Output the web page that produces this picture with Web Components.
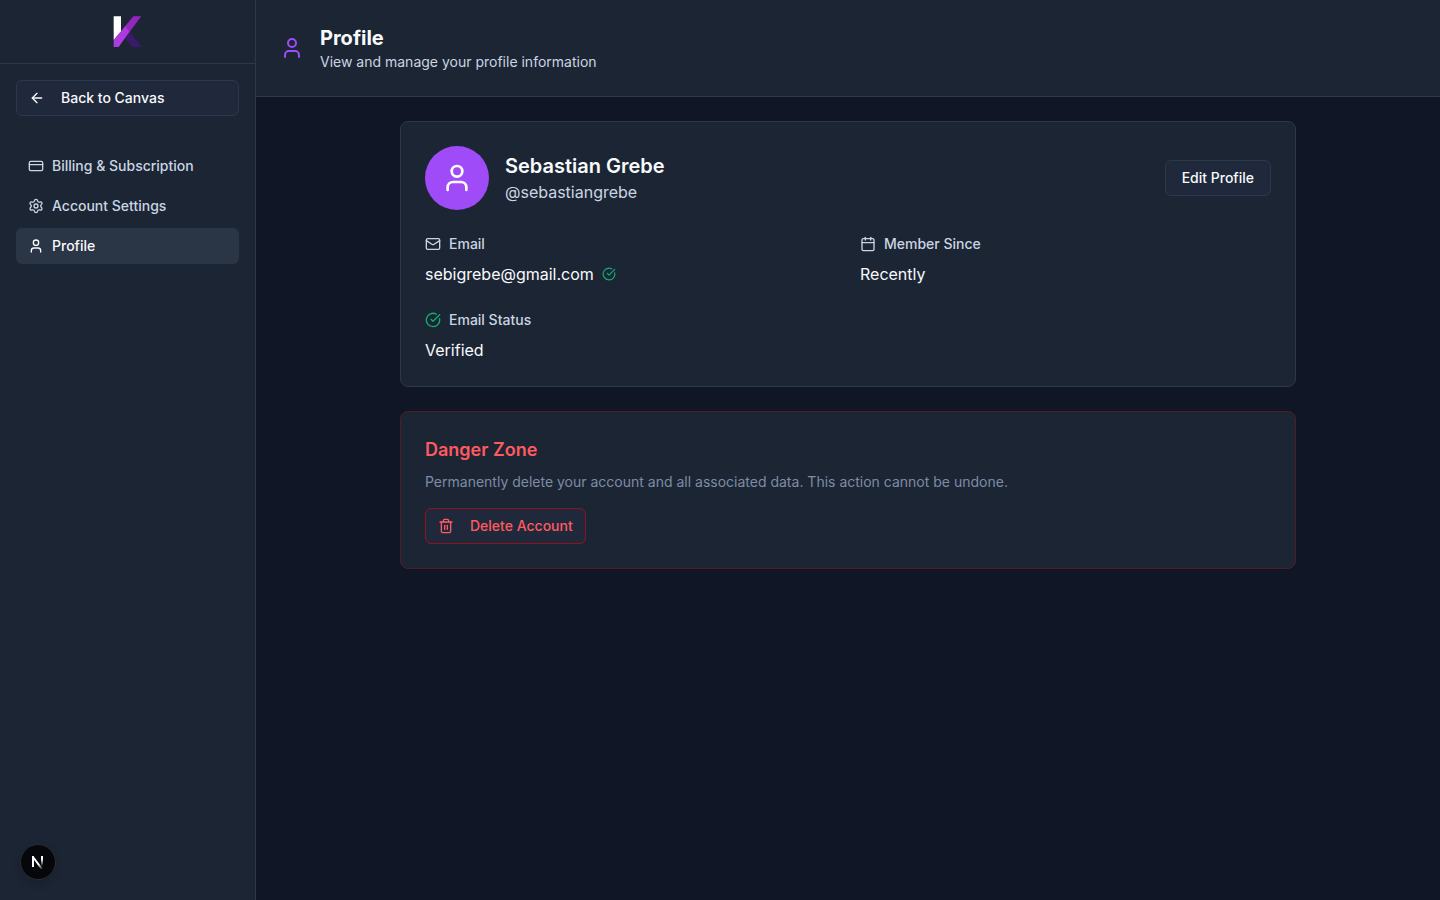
<!DOCTYPE html>
<html lang="en">
<head>
<meta charset="utf-8">
<meta name="viewport" content="width=device-width, initial-scale=1">
<title>Profile</title>
<style>
    :root{
        --bg-page: #101625;
        --bg-panel: #1c2534;
        --bg-button: #20283b;
        --bg-active: #2a3546;
        --border: #2c394b;
        --text: #f8fafc;
        --text-soft: #cad5e2;
        --text-muted: #7c8ca6;
        --accent: #9f4bf7;
        --success: #0fae75;
        --danger: #ff5a60;
        --danger-border: #8f1420;
        --danger-border-soft: #511c2a;
    }
    body{
        margin: 0;
        background: var(--bg-page);
        color: var(--text);
        font-family: Inter, "Liberation Sans", sans-serif;
        font-size: 16px;
        line-height: 24px;
    }
</style>
</head>
<body>

<app-shell>
    <app-sidebar slot="sidebar">
        <app-button slot="action" icon="arrow" wide>Back to Canvas</app-button>
        <nav-item icon="card" href="#billing">Billing &amp; Subscription</nav-item>
        <nav-item icon="settings" href="#settings">Account Settings</nav-item>
        <nav-item icon="user" href="#profile" active>Profile</nav-item>
    </app-sidebar>

    <page-header icon="user">
        <span slot="title">Profile</span>
        <span slot="subtitle">View and manage your profile information</span>
    </page-header>

    <page-content>
        <app-card>
            <profile-summary>
                <span slot="name">Sebastian Grebe</span>
                <span slot="handle">@sebastiangrebe</span>
                <app-button slot="action">Edit Profile</app-button>
            </profile-summary>
            <field-grid>
                <profile-field icon="mail" label="Email" verified>sebigrebe@gmail.com</profile-field>
                <profile-field icon="calendar" label="Member Since">Recently</profile-field>
                <profile-field icon="check" label="Email Status" success>Verified</profile-field>
            </field-grid>
        </app-card>

        <app-card danger>
            <danger-zone>
                <span slot="title">Danger Zone</span>
                <span slot="text">Permanently delete your account and all associated data. This action cannot be undone.</span>
                <app-button slot="action" icon="trash" danger>Delete Account</app-button>
            </danger-zone>
        </app-card>
    </page-content>
</app-shell>
<dev-badge></dev-badge>

<script>
const icons = {
    arrow: '<path d="m12 19-7-7 7-7"/><path d="M19 12H5"/>',
    card: '<rect width="20" height="14" x="2" y="5" rx="2"/><path d="M2 10h20"/>',
    settings: '<path d="M9.671 4.136a2.34 2.34 0 0 1 4.659 0 2.34 2.34 0 0 0 3.319 1.915 2.34 2.34 0 0 1 2.33 4.033 2.34 2.34 0 0 0 0 3.831 2.34 2.34 0 0 1-2.33 4.033 2.34 2.34 0 0 0-3.319 1.915 2.34 2.34 0 0 1-4.659 0 2.34 2.34 0 0 0-3.32-1.915 2.34 2.34 0 0 1-2.33-4.033 2.34 2.34 0 0 0 0-3.831A2.34 2.34 0 0 1 6.35 6.051a2.34 2.34 0 0 0 3.319-1.915"/><circle cx="12" cy="12" r="3"/>',
    user: '<path d="M19 21v-2a4 4 0 0 0-4-4H9a4 4 0 0 0-4 4v2"/><circle cx="12" cy="7" r="4"/>',
    mail: '<path d="m22 7-8.991 5.727a2 2 0 0 1-2.009 0L2 7"/><rect x="2" y="4" width="20" height="16" rx="2"/>',
    calendar: '<path d="M8 2v4"/><path d="M16 2v4"/><rect width="18" height="18" x="3" y="4" rx="2"/><path d="M3 10h18"/>',
    check: '<path d="M21.801 10A10 10 0 1 1 17 3.335"/><path d="m9 11 3 3L22 4"/>',
    trash: '<path d="M10 11v6"/><path d="M14 11v6"/><path d="M19 6v14a2 2 0 0 1-2 2H7a2 2 0 0 1-2-2V6"/><path d="M3 6h18"/><path d="M8 6V4a2 2 0 0 1 2-2h4a2 2 0 0 1 2 2v2"/>'
};

class BaseElement extends HTMLElement {
    constructor(){
        super();
        this.attachShadow({mode:'open'});
    }
    getTemplate(){
        const template = document.createElement('template');
        template.innerHTML = `
        <style>
        *{
            margin: 0;
            padding: 0;
            box-sizing: border-box;
        }
        :host{
            display: block;
            box-sizing: border-box;
        }
        ${this.getStyles()}
        </style>
        ${this.getMarkup()}
        `;
        return template;
    }
    connectedCallback(){
        if (this.shadowRoot.childNodes.length) return;
        this.shadowRoot.appendChild(this.getTemplate().content.cloneNode(true));
    }
}

class AppIcon extends BaseElement {
    getStyles(){
        return `
        :host{
            flex: none;
            width: var(--icon-size, 16px);
            height: var(--icon-size, 16px);
        }
        svg{
            display: block;
            width: 100%;
            height: 100%;
        }
        `
    }
    getMarkup(){
        return `
        <svg viewBox="0 0 24 24" fill="none" stroke="currentColor" stroke-width="2" stroke-linecap="round" stroke-linejoin="round" aria-hidden="true">${icons[this.getAttribute('name')]}</svg>
        `
    }
}

class AppShell extends BaseElement {
    getStyles(){
        return `
        :host{
            display: flex;
            min-height: 100vh;
        }
        main{
            flex: 1;
            min-width: 0;
        }
        `
    }
    getMarkup(){
        return `
        <slot name="sidebar"></slot>
        <main><slot></slot></main>
        `
    }
}

class AppSidebar extends BaseElement {
    getStyles(){
        return `
        :host{
            flex: none;
            width: 256px;
            background: var(--bg-panel);
            border-right: 1px solid var(--border);
        }
        .brand{
            display: flex;
            align-items: center;
            justify-content: center;
            height: 64px;
            border-bottom: 1px solid var(--border);
        }
        .brand svg{
            width: 32px;
            height: 32px;
        }
        .action{
            padding: 16px;
        }
        nav{
            display: flex;
            flex-direction: column;
            gap: 4px;
            padding: 16px;
        }
        `
    }
    getMarkup(){
        return `
        <div class="brand">
            <svg viewBox="2 2 96 96" role="img" aria-label="Logo">
                <path fill="#fff" d="M7 3h22v46L7 75z"/>
                <path fill="#3b1a6c" d="M54 49 91 95H63L40 68z"/>
                <path fill="#9226bd" d="M66 3h24L53 52 41 33z"/>
                <path fill="#ad3be0" d="M42 32 54 50 22 95H7V73z"/>
            </svg>
        </div>
        <div class="action"><slot name="action"></slot></div>
        <nav><slot></slot></nav>
        `
    }
}

class NavItem extends BaseElement {
    getStyles(){
        return `
        a{
            display: flex;
            align-items: center;
            gap: 8px;
            padding: 8px 12px;
            border-radius: 6px;
            color: var(--text-soft);
            font-size: 14px;
            font-weight: 500;
            line-height: 20px;
            text-decoration: none;
        }
        :host([active]) a{
            background: var(--bg-active);
            color: var(--text);
        }
        `
    }
    getMarkup(){
        return `
        <a href="${this.getAttribute('href')}">
            <app-icon name="${this.getAttribute('icon')}"></app-icon>
            <slot></slot>
        </a>
        `
    }
}

class AppButton extends BaseElement {
    getStyles(){
        return `
        :host{
            display: inline-block;
            vertical-align: top;
        }
        :host([wide]){
            display: block;
        }
        button{
            display: flex;
            align-items: center;
            gap: 16px;
            height: 36px;
            padding: 0 16px;
            border: 1px solid var(--border);
            border-radius: 6px;
            background: var(--bg-button);
            color: var(--text);
            font-family: inherit;
            font-size: 14px;
            font-weight: 500;
            line-height: 20px;
            white-space: nowrap;
            cursor: pointer;
        }
        :host([icon]) button{
            padding: 0 12px;
        }
        :host([wide]) button{
            width: 100%;
        }
        :host([danger]) button{
            border-color: var(--danger-border);
            color: var(--danger);
        }
        `
    }
    getMarkup(){
        const icon = this.getAttribute('icon');
        return `
        <button type="button">
            ${icon ? `<app-icon name="${icon}"></app-icon>` : ''}
            <slot></slot>
        </button>
        `
    }
}

class PageHeader extends BaseElement {
    getStyles(){
        return `
        header{
            display: flex;
            align-items: center;
            gap: 16px;
            padding: 24px;
            background: var(--bg-panel);
            border-bottom: 1px solid var(--border);
        }
        app-icon{
            --icon-size: 24px;
            color: var(--accent);
        }
        h1{
            font-size: 20px;
            font-weight: 700;
            line-height: 28px;
        }
        p{
            color: var(--text-soft);
            font-size: 14px;
            line-height: 20px;
        }
        `
    }
    getMarkup(){
        return `
        <header>
            <app-icon name="${this.getAttribute('icon')}"></app-icon>
            <div>
                <h1><slot name="title"></slot></h1>
                <p><slot name="subtitle"></slot></p>
            </div>
        </header>
        `
    }
}

class PageContent extends BaseElement {
    getStyles(){
        return `
        :host{
            padding: 24px;
        }
        .stack{
            display: flex;
            flex-direction: column;
            gap: 24px;
            max-width: 896px;
            margin: 0 auto;
        }
        `
    }
    getMarkup(){
        return `<div class="stack"><slot></slot></div>`
    }
}

class AppCard extends BaseElement {
    getStyles(){
        return `
        :host{
            padding: 24px;
            background: var(--bg-panel);
            border: 1px solid var(--border);
            border-radius: 8px;
        }
        :host([danger]){
            border-color: var(--danger-border-soft);
        }
        `
    }
    getMarkup(){
        return `<slot></slot>`
    }
}

class ProfileSummary extends BaseElement {
    getStyles(){
        return `
        :host{
            display: flex;
            align-items: center;
            gap: 16px;
            margin-bottom: 24px;
        }
        .avatar{
            --icon-size: 32px;
            display: grid;
            place-items: center;
            width: 64px;
            height: 64px;
            border-radius: 50%;
            background: var(--accent);
            color: #fff;
        }
        .who{
            flex: 1;
        }
        h2{
            font-size: 20px;
            font-weight: 600;
            line-height: 28px;
        }
        p{
            color: var(--text-soft);
        }
        `
    }
    getMarkup(){
        return `
        <div class="avatar"><app-icon name="user"></app-icon></div>
        <div class="who">
            <h2><slot name="name"></slot></h2>
            <p><slot name="handle"></slot></p>
        </div>
        <slot name="action"></slot>
        `
    }
}

class FieldGrid extends BaseElement {
    getStyles(){
        return `
        :host{
            display: grid;
            grid-template-columns: 1fr 1fr;
            gap: 24px;
        }
        `
    }
    getMarkup(){
        return `<slot></slot>`
    }
}

class ProfileField extends BaseElement {
    getStyles(){
        return `
        .label, .value{
            display: flex;
            align-items: center;
            gap: 8px;
        }
        .label{
            margin-bottom: 8px;
            color: var(--text-soft);
            font-size: 14px;
            font-weight: 500;
            line-height: 20px;
        }
        .verified{
            --icon-size: 14px;
        }
        .verified, :host([success]) .label app-icon{
            color: var(--success);
        }
        `
    }
    getMarkup(){
        return `
        <dl>
            <dt class="label">
                <app-icon name="${this.getAttribute('icon')}"></app-icon>
                ${this.getAttribute('label')}
            </dt>
            <dd class="value">
                <slot></slot>
                ${this.hasAttribute('verified') ? '<app-icon class="verified" name="check"></app-icon>' : ''}
            </dd>
        </dl>
        `
    }
}

class DangerZone extends BaseElement {
    getStyles(){
        return `
        h2{
            margin-bottom: 8px;
            color: var(--danger);
            font-size: 18px;
            font-weight: 600;
            line-height: 28px;
        }
        p{
            margin-bottom: 16px;
            color: var(--text-muted);
            font-size: 14px;
            line-height: 20px;
        }
        .action{
            display: flex;
        }
        `
    }
    getMarkup(){
        return `
        <h2><slot name="title"></slot></h2>
        <p><slot name="text"></slot></p>
        <div class="action"><slot name="action"></slot></div>
        `
    }
}

/* floats over the page in the bottom left corner */
class DevBadge extends BaseElement {
    getStyles(){
        return `
        :host{
            position: fixed;
            left: 20px;
            bottom: 20px;
        }
        button{
            display: grid;
            place-items: center;
            width: 36px;
            height: 36px;
            border: 1px solid #2b2d31;
            border-radius: 50%;
            background: #05070a;
            box-shadow: 0 4px 8px rgba(0, 0, 0, .15);
            cursor: pointer;
        }
        svg{
            width: 14px;
            height: 14px;
        }
        `
    }
    getMarkup(){
        return `
        <button type="button" aria-label="Open developer tools">
            <svg viewBox="0 0 14 14" fill="none" stroke-width="2">
                <defs>
                    <linearGradient id="stem" gradientUnits="userSpaceOnUse" x1="0" y1="1" x2="0" y2="11">
                        <stop offset=".3" stop-color="#fff"/>
                        <stop offset="1" stop-color="#fff" stop-opacity="0"/>
                    </linearGradient>
                    <linearGradient id="diagonal" gradientUnits="userSpaceOnUse" x1="6" y1="7" x2="12" y2="14">
                        <stop offset=".3" stop-color="#fff"/>
                        <stop offset="1" stop-color="#fff" stop-opacity="0"/>
                    </linearGradient>
                </defs>
                <path stroke="#fff" d="M2 12V1"/>
                <path stroke="url(#diagonal)" d="m2 2 9 12"/>
                <path stroke="url(#stem)" d="M11 1v10"/>
            </svg>
        </button>
        `
    }
}

customElements.define('app-icon', AppIcon);
customElements.define('app-shell', AppShell);
customElements.define('app-sidebar', AppSidebar);
customElements.define('nav-item', NavItem);
customElements.define('app-button', AppButton);
customElements.define('page-header', PageHeader);
customElements.define('page-content', PageContent);
customElements.define('app-card', AppCard);
customElements.define('profile-summary', ProfileSummary);
customElements.define('field-grid', FieldGrid);
customElements.define('profile-field', ProfileField);
customElements.define('danger-zone', DangerZone);
customElements.define('dev-badge', DevBadge);
</script>
</body>
</html>
